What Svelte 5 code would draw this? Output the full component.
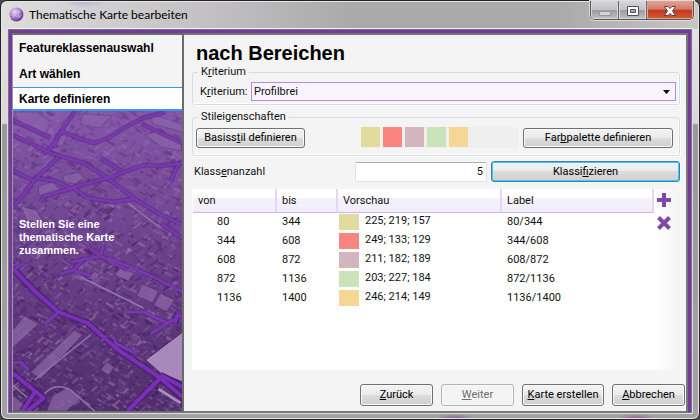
<script>
  let steps = ['Featureklassenauswahl', 'Art wählen', 'Karte definieren'];
  let active = $state(2);
  let count = $state('5');
  let rows = [
    { from: 80, to: 344, rgb: [225, 219, 157] },
    { from: 344, to: 608, rgb: [249, 133, 129] },
    { from: 608, to: 872, rgb: [211, 182, 189] },
    { from: 872, to: 1136, rgb: [203, 227, 184] },
    { from: 1136, to: 1400, rgb: [246, 214, 149] }
  ];

  // Small building blocks of the aerial city map, from a seeded generator.
  let seed = 7;
  function rnd() {
    seed = (seed * 16807) % 2147483647;
    return seed / 2147483647;
  }
  const tones = ['#9b78b5', '#8a60a6', '#432060', '#391850', '#a585bb', '#6d4590', '#4a2467', '#7d559b'];
  const blocks = Array.from({ length: 2600 }, () => {
    const x = 10 + rnd() * 174;
    const y = 108 + rnd() * 304;
    const w = 2 + rnd() * 7;
    const h = 1 + rnd() * 1.8;
    const a = rnd() > 0.45 ? 30 : -40;
    return { x, y, w, h, a, c: tones[Math.floor(rnd() * tones.length)], o: 0.25 + rnd() * 0.45 };
  });
  const fields = [
    'M14 112h22l14 10-6 12-24-8z', 'M52 146l14-30 8 2-12 28z', 'M64 175l14-3 6 6-10 6-12-3z',
    'M38 186l14-4 8 8-12 8-10-4z', 'M145 135l12-4 24 12v8l-20-4z', 'M150 114l32 10v8l-30-8z',
    'M82 114l30 2-14 12-18-4z', 'M120 268l14 5-6 8-14-6z', 'M142 284l16 7-6 12-16-7z',
    'M160 293l14 7-8 12-13-7z', 'M12 330l12-14 14 8-26 24z', 'M30 372l44-42 8 5-42 44z',
    'M52 396l14-8 16 9-16 14h-20z', 'M106 362l8 5-6 8-8-5z', 'M12 395l20 16h-20z', 'M20 206l16 4 8 14-18-4z'
  ];
  const roads = [
    'M75 110 50 148 43 154', 'M12 135 50 153 83 163 107 178 133 198 157 213 182 225',
    'M54 148 57 136 63 132 80 139 94 143 108 138 125 127 143 118 165 112', 'M141 124 160 133 182 143',
    'M12 208 37 177 57 158', 'M37 178 55 181 70 188 107 178 143 165 160 166 182 163',
    'M40 202 44 196 73 188 87 198 113 202 133 199', 'M100 158 123 172', 'M12 171 35 181',
    'M170 182 175 169 182 161', 'M72 262 100 256 127 270', 'M87 246 100 256 103 244',
    'M12 120 50 138', 'M12 270 22 264 28 266', 'M160 223 182 238',
    'M107 258 130 267 153 277 182 292', 'M127 312 143 312 167 323 182 315', 'M167 323 150 334',
    'M12 363 20 362 28 370', 'M45 324 58 312', 'M60 274 73 270 84 258', 'M73 270 91 276',
    'M113 338 116 344 135 353 136 349', 'M101 341 106 336'
  ];
  const avenues = [
    'M12 268 33 290 58 312 87 323 118 350 160 378 182 397',
    'M160 378 127 411', 'M160 375 182 387', 'M12 373 43 398 27 411', 'M35 391 22 411', 'M174 323 178 313'
  ];
</script>

<div class="window">
  <header class="titlebar">
    <svg class="appicon" viewBox="0 0 16 16" aria-hidden="true">
      <defs>
        <radialGradient id="orb" cx="0.38" cy="0.32" r="0.7">
          <stop offset="0" stop-color="#eadcf5" />
          <stop offset="0.5" stop-color="#b184d2" />
          <stop offset="1" stop-color="#5c3583" />
        </radialGradient>
      </defs>
      <circle cx="8" cy="8" r="7.4" fill="url(#orb)" />
      <path d="M3 5l3-2 2 2 4-1M2 9l4-1 3 3 4-2M6 3v5l-2 4M11 4l-1 5 2 3" fill="none" stroke="#dbc3ec" stroke-width=".6" />
    </svg>
    <h1>Thematische Karte bearbeiten</h1>
    <div class="caption">
      <button aria-label="Minimieren">
        <svg width="14" height="14" viewBox="0 0 14 14"><path d="M1.500 8.500h11v4h-11z" fill="#d5d5d5" stroke="#98989c" /></svg>
      </button>
      <button aria-label="Maximieren">
        <svg width="14" height="14" viewBox="0 0 14 14"><path d="M1.500 3.500h11v9h-11z" fill="#fff" stroke="#50505c" /><path d="M4.500 6.500h5v3h-5z" fill="#aaa" stroke="#50505c" /></svg>
      </button>
      <button class="close" aria-label="Schließen">
        <svg width="14" height="14" viewBox="0 0 14 14"><path d="M1.500 3.500h3.500l2 2 2-2h3.500l-3 4.500 3 4.500h-3.500l-2-2-2 2h-3.500l3-4.500z" fill="#fff" stroke="#5d3d48" /></svg>
      </button>
    </div>
  </header>

  <div class="frame">
    <aside>
      <nav>
        {#each steps as step, i}
          <button class:active={active === i} onclick={() => (active = i)}>{step}</button>
        {/each}
      </nav>
      <div class="map">
        <svg viewBox="12 111 170 300" preserveAspectRatio="xMidYMid slice" aria-hidden="true">
          <defs>
            <linearGradient id="ground" x1="0" y1="0" x2="0" y2="1">
              <stop offset="0" stop-color="#8457a6" />
              <stop offset="0.45" stop-color="#6b4189" />
              <stop offset="1" stop-color="#52306c" />
            </linearGradient>
            <linearGradient id="haze" x1="0" y1="0" x2="0" y2="1">
              <stop offset="0" stop-color="#8457aa" stop-opacity=".55" />
              <stop offset="0.5" stop-color="#6f4290" stop-opacity=".2" />
              <stop offset="1" stop-color="#4b2369" stop-opacity=".15" />
            </linearGradient>
          </defs>
          <path d="M12 111h170v300H12z" fill="url(#ground)" />
          {#each blocks as b}
            <rect x={b.x} y={b.y} width={b.w} height={b.h} fill={b.c} opacity={b.o} transform={`rotate(${b.a} ${b.x} ${b.y})`} />
          {/each}
          {#each fields as d}
            <path {d} fill="#9370ae" fill-opacity=".75" stroke="#502a6c" stroke-width=".7" />
          {/each}
          <path d="M158 389 180 403" stroke="#b79fc8" stroke-width="3" />
          <path d="M80 277 143 308M127 203 160 228" stroke="#a186b5" stroke-width="1.500" fill="none" />
          <path d="M44 394 Q54 382 70 390 L94 411M12 385 30 400M34 380 90 335" stroke="#9d82b1" stroke-width="1.500" fill="none" />
          <path d="M12 111h170v300H12z" fill="url(#haze)" />
          <path d="M145 360 182 332V382L160 373z" fill="#a78abb" stroke="#442160" />
          {#each roads as d}
            <path {d} fill="none" stroke="#56298a" stroke-width="5" stroke-opacity=".6" stroke-linejoin="round" />
          {/each}
          {#each avenues as d}
            <path {d} fill="none" stroke="#451c70" stroke-width="7" stroke-opacity=".7" stroke-linejoin="round" />
          {/each}
          {#each roads as d}
            <path {d} fill="none" stroke="#7b38ad" stroke-width="2.500" stroke-linejoin="round" />
          {/each}
          {#each avenues as d}
            <path {d} fill="none" stroke="#7a2fb4" stroke-width="4" stroke-linejoin="round" />
          {/each}
        </svg>
        <p>Stellen Sie eine thematische Karte zusammen.</p>
      </div>
    </aside>

    <main>
      <h2>nach Bereichen</h2>

      <fieldset>
        <legend>K<u>r</u>iterium</legend>
        <div class="line criterion">
          <label for="criterion">K<u>r</u>iterium:</label>
          <div class="picker">
            <select id="criterion"><option>Profilbrei</option></select>
            <svg width="7" height="4" viewBox="0 0 7 4" aria-hidden="true"><path d="M0 0h7L3.500 4z" /></svg>
          </div>
        </div>
      </fieldset>

      <fieldset class="style">
        <legend>Stileigenschaften</legend>
        <div class="line styles">
          <button class="btn base">Basiss<u>t</u>il definieren</button>
          <div class="palette">
            {#each rows as r}
              <span style:background={`rgb(${r.rgb.join()})`}></span>
            {/each}
          </div>
          <button class="btn colors">Far<u>b</u>palette definieren</button>
        </div>
      </fieldset>

      <div class="line classes">
        <label for="count">Klass<u>e</u>nanzahl</label>
        <input id="count" type="text" inputmode="numeric" bind:value={count} />
        <button class="btn default">Klassi<u>f</u>izieren</button>
      </div>

      <div class="list">
        <div class="scroll">
          <table>
            <thead>
              <tr><th class="from">von</th><th class="to">bis</th><th class="preview">Vorschau</th><th>Label</th></tr>
            </thead>
            <tbody>
              {#each rows as r}
                <tr>
                  <td class="indent">{r.from}</td>
                  <td>{r.to}</td>
                  <td class="color"><div><i style:background={`rgb(${r.rgb.join()})`}></i>{r.rgb.join('; ')}</div></td>
                  <td>{r.from}/{r.to}</td>
                </tr>
              {/each}
            </tbody>
          </table>
        </div>
        <div class="tools">
          <button aria-label="Klasse hinzufügen">
            <svg width="14" height="14" viewBox="0 0 14 14"><path d="M7 0v14M0 7h14" /></svg>
          </button>
          <button aria-label="Klasse löschen">
            <svg width="14" height="14" viewBox="0 0 14 14"><path d="M1.500 1.500l11 11M12.500 1.500l-11 11" /></svg>
          </button>
        </div>
      </div>

      <footer>
        <button class="btn"><u>Z</u>urück</button>
        <button class="btn" disabled><u>W</u>eiter</button>
        <button class="btn wide"><u>K</u>arte erstellen</button>
        <button class="btn"><u>A</u>bbrechen</button>
      </footer>
    </main>
  </div>
</div>

<style>
  :global(body) { margin: 0; background: #4a4a4a; }
  * { box-sizing: border-box; }
  .window {
    min-height: 100vh;
    display: flex;
    flex-direction: column;
    padding: 0 5px 5px;
    border: 1px solid #222;
    border-radius: 7px;
    box-shadow: inset 0 0 0 1px #e6e6e6;
    background: radial-gradient(ellipse 20px 5px at 65% 100%, #9050a8, #9050a800),
      radial-gradient(ellipse 20px 5px at 91% 100%, #a050a8, #a050a800),
      radial-gradient(ellipse 24px 7px at 12% 0, #b9b0d8, #b9b0d800),
      linear-gradient(#0000 28px, #e3e1e1 28px, #d9d6d6 122px, #999 124px, #a2a2a2),
      linear-gradient(90deg, #dedddd, #d0cdd0 15%, #c4c2c5 28%, #aaa 50%, #aaa 80%, #c6c6c6);
    font: 11px/14px Roboto, "Liberation Sans", sans-serif;
    color: #111;
  }
  button, input, select { font: inherit; color: inherit; margin: 0; }
  .titlebar { height: 27px; display: flex; align-items: center; padding-left: 3px; gap: 5px; }
  .appicon { width: 15px; height: 15px; }
  h1 { margin: 0; flex: 1; font: 12px/16px Lato, "Noto Sans", sans-serif; color: #000; }
  .caption { display: flex; align-self: flex-start; border: 1px solid #555; border-top: 0; border-radius: 0 0 5px 5px; overflow: hidden; box-shadow: 0 0 0 1px #ddd; }
  .caption button {
    width: 28px; height: 18px; padding: 0; border: 0; border-right: 1px solid #666;
    display: flex; align-items: center; justify-content: center;
    background: linear-gradient(#d6d6d8, #c2c2c4 48%, #9c9ca0 50%, #c0c0c2);
    box-shadow: inset 0 0 0 1px #d8d8da;
  }
  .caption .close { width: 46px; border: 0; background: linear-gradient(#e3a397, #d37a68 46%, #bd3820 50%, #d65b35); box-shadow: inset 0 0 0 1px #e5a08f; }
  .frame {
    flex: 1; display: flex; margin: 0 1px;
    border: 1px solid #ddd; border-top-color: #eee;
    background: #743a9f;
    outline: 1px solid #777; outline-offset: -2px;
    padding: 4px 4px 1px;
  }
  aside { width: 172px; flex: none; display: flex; flex-direction: column; border: 2px solid #6b6b6b; border-left: 1px solid #999; border-bottom-width: 1px; }
  nav { display: flex; flex-direction: column; background: #f4f4f4; }
  nav button { height: 26px; padding: 0 6px; border: 0; background: none; text-align: left; font: bold 12px/16px "Liberation Sans", sans-serif; color: #000; }
  nav .active { height: 24px; background: #fff; border: solid #3a97ee; border-width: 1px 0 2px; }
  .map { position: relative; flex: 1; min-height: 240px; overflow: hidden; }
  .map svg { position: absolute; inset: 0; width: 100%; height: 100%; }
  .map p { position: absolute; left: 6px; right: 40px; top: 107px; margin: 0; color: #fff; font: bold 11px/13px "Liberation Sans", sans-serif; }
  main { flex: 1; min-width: 0; display: flex; flex-direction: column; background: #f4f4f4; border: solid #777; border-width: 2px 2px 1px 0; padding: 6px 6px 5px 8px; }
  h2 { margin: 0 0 0 4px; font: bold 20px/24px "Liberation Sans", sans-serif; color: #000; }
  fieldset { margin: 0; padding: 0 3px 3px; border: 1px solid #d2dde6; border-radius: 3px; box-shadow: inset -1px -1px #fff, 1px 1px #fff; min-width: 0; }
  legend { margin-left: 2px; padding: 0 3px; }
  .style { margin-top: 5px; padding-bottom: 7px; }
  .line { display: flex; align-items: center; }
  .criterion { padding: 3px 0 0 4px; }
  .criterion label { width: 51px; }
  .picker { position: relative; flex: 1; }
  .picker select { display: block; width: 100%; height: 19px; padding: 0 2px; border: 1px solid #b48bd9; border-radius: 0; background: #f7f4fb; appearance: none; }
  .picker svg { position: absolute; right: 6px; top: 8px; pointer-events: none; }
  .btn {
    height: 22px; width: 73px; flex: none; padding: 0; border: 1px solid #707070; border-radius: 3px;
    background: linear-gradient(#f3f3f3, #ebebeb 49%, #dcdcdc 50%, #cfcfcf);
    box-shadow: inset 0 0 0 1px #fafafa; color: #000;
  }
  .btn:disabled { border-color: #b0b5b8; background: #f4f4f4; color: #6d6d6d; }
  .base, .colors { height: 20px; }
  .base { width: 109px; }
  .colors { width: 150px; }
  .styles { padding: 3px 3px 0 0; }
  .palette { flex: 1; display: flex; gap: 3px; height: 21px; margin: 0 5px 0 56px; background: #efefef; }
  .palette span { width: 19px; height: 20px; }
  .classes { margin: 5px 0 7px; padding: 0 0 0 2px; }
  .classes label { flex: 1; }
  .classes input { width: 132px; height: 20px; padding: 0 3px; text-align: right; border: 1px solid #dde2ea; border-top-color: #abadb3; border-radius: 2px; background: #fff; }
  .default { width: 189px; height: 21px; margin-left: 4px; border-color: #3c7fb1; box-shadow: inset 0 0 0 1px #3fc8f0; }
  .list { flex: 1; min-height: 120px; display: flex; background: #fff; }
  .scroll { flex: 1; padding-left: 1px; }
  table { width: 100%; border-collapse: separate; border-spacing: 0; table-layout: fixed; }
  th { height: 24px; padding: 0 5px; text-align: left; font-weight: normal; border-right: 2px solid #e4d8f0; border-bottom: 1px solid #cdb5e6; background: linear-gradient(#fff 40%, #f6f2fb 41%, #f2edf9); }
  .from { width: 84px; }
  .to { width: 61px; }
  .preview { width: 164px; }
  td { height: 19px; padding: 0 5px 2px; }
  .indent { padding-left: 24px; }
  .color { padding: 0 1px 1px; }
  .color div { display: flex; gap: 6px; height: 16px; line-height: 14px; }
  .color i { width: 20px; height: 16px; }
  .tools { width: 26px; padding: 4px 0 0 3px; display: flex; flex-direction: column; gap: 9px; background: linear-gradient(90deg, #fff, #f4f4f4); }
  .tools button { width: 14px; height: 14px; padding: 0; border: 0; background: none; display: block; }
  .tools svg { display: block; }
  .tools path { stroke: #8049a8; stroke-width: 4; }
  footer { display: flex; justify-content: flex-end; gap: 8px; padding-top: 14px; margin-right: -5px; }
  .wide { width: 82px; }
</style>
